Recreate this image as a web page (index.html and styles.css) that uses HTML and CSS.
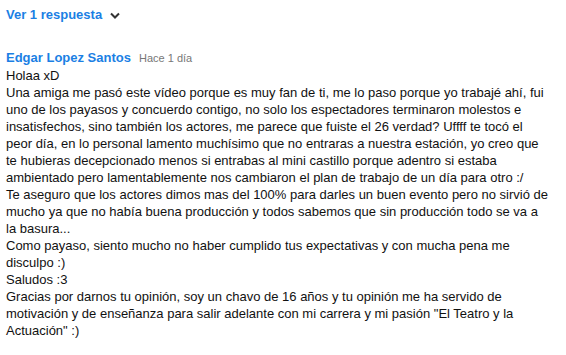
FILE: index.html
```html
<!DOCTYPE html>
<html lang="es">
<head>
  <meta charset="UTF-8">
  <title>Respuestas</title>
  <link rel="stylesheet" href="styles.css">
</head>
<body>
  <div class="thread">
    <div class="toggle">
      <span>Ver 1 respuesta</span>
      <svg class="chev" width="10" height="7" viewBox="0 0 10 7"><path d="M1 1.5 L5 5.5 L9 1.5" fill="none" stroke="#333" stroke-width="2"/></svg>
    </div>
    <div class="reply">
      <div class="meta">
        <span class="author">Edgar Lopez Santos</span>
        <span class="time">Hace 1 día</span>
      </div>
      <div class="text">Holaa xD<br>Una amiga me pasó este vídeo porque es muy fan de ti, me lo paso porque yo trabajé ahí, fui uno de los payasos y concuerdo contigo, no solo los espectadores terminaron molestos e insatisfechos, sino también los actores, me parece que fuiste el 26 verdad? Uffff te tocó el peor día, en lo personal lamento muchísimo que no entraras a nuestra estación, yo creo que te hubieras decepcionado menos si entrabas al mini castillo porque adentro si estaba ambientado pero lamentablemente nos cambiaron el plan de trabajo de un día para otro :/<br>Te aseguro que los actores dimos mas del 100% para darles un buen evento pero no sirvió de mucho ya que no había buena producción y todos sabemos que sin producción todo se va a la basura...<br>Como payaso, siento mucho no haber cumplido tus expectativas y con mucha pena me disculpo :)<br>Saludos :3<br>Gracias por darnos tu opinión, soy un chavo de 16 años y tu opinión me ha servido de motivación y de enseñanza para salir adelante con mi carrera y mi pasión "El Teatro y la Actuación" :)</div>
    </div>
  </div>
</body>
</html>
```

FILE: styles.css
```css
* { box-sizing: border-box; margin: 0; padding: 0; }
body {
  font-family: Arial, "Liberation Sans", sans-serif;
  background: #fff;
  color: #111;
}
.thread {
  width: 556px;
  padding: 6px 6px;
}
.toggle {
  display: flex;
  align-items: center;
  gap: 8px;
  color: #1b7fe4;
  font-size: 13px;
  font-weight: bold;
  height: 17px;
}
.chev { margin-top: 1px; }
.reply { margin-top: 27px; }
.meta {
  display: flex;
  align-items: baseline;
  gap: 8px;
  height: 17px;
}
.author {
  color: #1b7fe4;
  font-size: 13px;
  font-weight: bold;
}
.time {
  color: #777;
  font-size: 11px;
}
.text {
  font-size: 13px;
  line-height: 17px;
}
```
